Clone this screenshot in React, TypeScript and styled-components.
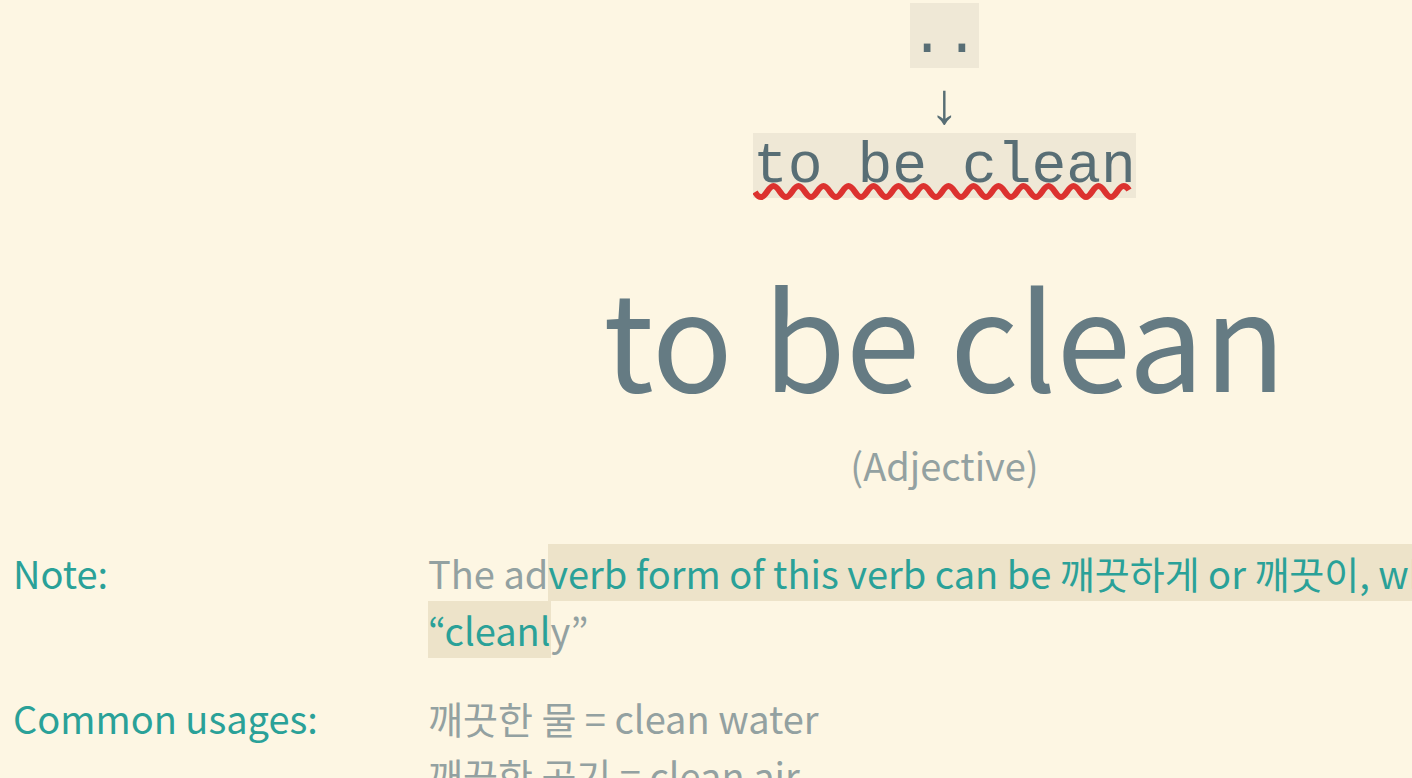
import React from "react";
import styled, { createGlobalStyle } from "styled-components";

const GlobalStyle = createGlobalStyle`
  * { box-sizing: border-box; }
  body {
    margin: 0;
    background: #fdf6e3;
    color: #93a1a1;
    font-family: "Noto Sans CJK KR", "Noto Sans", sans-serif;
    font-size: 38px;
    line-height: 57px;
  }
`;

const Page = styled.main`
  display: flex;
  flex-direction: column;
  height: 100vh;
  overflow: hidden;
`;

const Answer = styled.section`
  display: flex;
  flex-direction: column;
  align-items: center;
  padding: 3px 0 0 477px;
  flex-shrink: 0;
`;

const Typed = styled.code`
  position: relative;
  height: 65px;
  line-height: 67px;
  background: #efe8d6;
  color: #586e75;
  font-family: "Liberation Mono", monospace;
  font-size: 58px;
  white-space: pre;
`;

const Arrow = styled.span`
  height: 65px;
  line-height: 72px;
  color: #586e75;
  font-family: "Liberation Serif", serif;
  font-size: 58px;
`;

const Squiggle = styled.svg`
  position: absolute;
  left: 0;
  bottom: -4px;
`;

const Word = styled.h1`
  margin: 56px 0 0;
  font-size: 134px;
  font-weight: 400;
  line-height: 160px;
  color: #657b83;
  white-space: nowrap;
`;

const Kind = styled.p`
  margin: 22px 0 0;
`;

const Details = styled.dl`
  display: grid;
  grid-template-columns: 415px 1fr;
  row-gap: 31px;
  margin: 51px 0 0;
  padding-left: 13px;
`;

const Term = styled.dt`
  color: #2aa198;
`;

const Text = styled.dd`
  margin: 0;
  white-space: nowrap;
`;

const Selected = styled.mark`
  display: inline-block;
  height: 57px;
  vertical-align: top;
  background: #ede3c9;
  color: #2aa198;
`;

// One wave is 25px long: a trough, a crest, and back to the trough.
const WAVES = 14;
const wavePath =
  "M2 10 Q5 15 8 15" +
  " c5 0 7.5 -11 12.5 -11 s7.5 11 12.5 11".repeat(WAVES) +
  " c5 0 7.5 -11 12.5 -11 q3 0 5.5 4";

export default function App() {
  return (
    <Page>
      <GlobalStyle />
      <Answer>
        <Typed>..</Typed>
        <Arrow>↓</Arrow>
        <Typed>
          to be clean
          <Squiggle width="380" height="20" viewBox="0 0 380 20" aria-hidden="true">
            <path d={wavePath} fill="none" stroke="#dc322f" strokeWidth="6" />
          </Squiggle>
        </Typed>
        <Word>to be clean</Word>
        <Kind>(Adjective)</Kind>
      </Answer>
      <Details>
        <Term>Note:</Term>
        <Text>
          The ad<Selected>verb form of this verb can be 깨끗하게 or 깨끗이, which means</Selected>
          <br />
          <Selected>“cleanl</Selected>y”
        </Text>
        <Term>Common usages:</Term>
        <Text>
          깨끗한 물 = clean water
          <br />
          깨끗한 공기 = clean air
        </Text>
      </Details>
    </Page>
  );
}
